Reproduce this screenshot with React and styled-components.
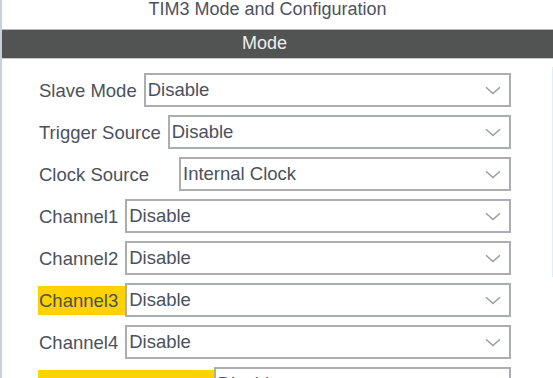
import React from "react";
import styled, { createGlobalStyle } from "styled-components";

const Global = createGlobalStyle`
  html, body { margin: 0; padding: 0; background: #ffffff; }
  body { font-family: "Liberation Sans", Arial, sans-serif; overflow: hidden; }
`;

const Panel = styled.div`
  width: 553px;
  height: 378px;
  box-sizing: border-box;
  border-left: 2px solid #c9d1d9;
  background: #ffffff;
  overflow: hidden;
  position: relative;
`;

const Title = styled.div`
  height: 29px;
  box-sizing: border-box;
  padding-right: 20px;
  text-align: center;
  font-size: 18px;
  line-height: 18px;
  color: #4d525c;
  white-space: nowrap;
`;

const SectionBar = styled.div`
  height: 30px;
  box-sizing: border-box;
  border-top: 1px solid #b4b8ba;
  border-bottom: 1px solid #c6c9ca;
  background: #525453;
  padding-right: 26px;
  text-align: center;
  font-size: 18px;
  line-height: 27px;
  color: #eeeeee;
`;

const Form = styled.div`
  display: flex;
  flex-direction: column;
  gap: 8px;
  padding: 14px 42px 0 36px;
`;

const Row = styled.div`
  display: flex;
  align-items: center;
  height: 34px;
`;

const Label = styled.span`
  height: 29px;
  line-height: 29px;
  padding: 0 ${(p) => p.$gap}px 0 1px;
  font-size: 18.5px;
  color: #4b515d;
  white-space: nowrap;
  background: ${(p) => (p.$highlight ? "#ffd200" : "transparent")};
`;

const Select = styled.div`
  flex: 1;
  height: 34px;
  box-sizing: border-box;
  border: 2px solid #aaaeb2;
  background: #ffffff;
  display: flex;
  align-items: center;
  justify-content: space-between;
  padding: 0 8px 0 2px;
  font-size: 18.5px;
  color: #4b515d;
  white-space: nowrap;
`;

const RightEdge = styled.div`
  position: absolute;
  right: 0;
  top: 67px;
  width: 1px;
  height: 210px;
  background: #e4edf7;
`;

const Chevron = () => (
  <svg width="16" height="9" viewBox="0 0 16 9" fill="none">
    <path d="M1 1.2 L8 7.5 L15 1.2" stroke="#979b9f" strokeWidth="1.4" />
  </svg>
);

const rows = [
  { label: "Slave Mode", value: "Disable", gap: 7 },
  { label: "Trigger Source", value: "Disable", gap: 7 },
  { label: "Clock Source", value: "Internal Clock", gap: 30 },
  { label: "Channel1", value: "Disable", gap: 7 },
  { label: "Channel2", value: "Disable", gap: 7 },
  { label: "Channel3", value: "Disable", gap: 7, highlight: true },
  { label: "Channel4", value: "Disable", gap: 7 },
  { label: "Combined Channels", value: "Disable", gap: 7, highlight: true },
];

export default function App() {
  return (
    <>
      <Global />
      <Panel>
        <Title>TIM3 Mode and Configuration</Title>
        <SectionBar>Mode</SectionBar>
        <Form>
          {rows.map((r) => (
            <Row key={r.label}>
              <Label $gap={r.gap} $highlight={r.highlight}>
                {r.label}
              </Label>
              <Select>
                <span>{r.value}</span>
                <Chevron />
              </Select>
            </Row>
          ))}
        </Form>
        <RightEdge />
      </Panel>
    </>
  );
}
